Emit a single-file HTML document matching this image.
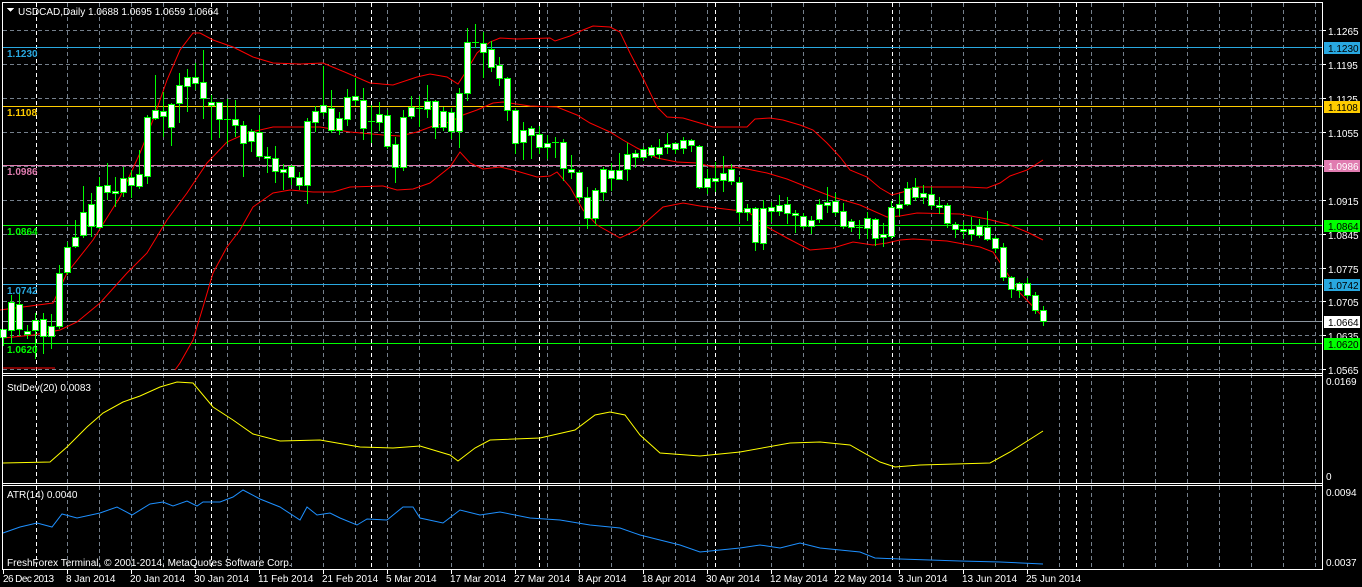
<!DOCTYPE html>
<html><head><meta charset="utf-8"><style>
html,body{margin:0;padding:0;background:#000;width:1362px;height:587px;overflow:hidden}
svg{display:block}
text{font-family:"Liberation Sans",sans-serif;font-size:10px}
</style></head><body>
<svg id="s" width="1362" height="587" xmlns="http://www.w3.org/2000/svg" shape-rendering="crispEdges">
<rect width="1362" height="587" fill="#000"/>
<g id="grid"></g>
<g id="lines"></g>
<g id="bands" fill="none" stroke="#ff0000" stroke-width="1" shape-rendering="auto"></g>
<g id="candles"></g>
<g id="ind" fill="none" shape-rendering="auto"></g>
<g id="frame" stroke="#fff" fill="none">
<path d="M2.5 2.5H1322.5V569.5H2.5Z"/>
<path d="M2 373.5H1322M2 375.5H1322M2 483.5H1322M2 485.5H1322"/>
</g>
<g id="txt" fill="#fff"></g>
</svg>
<script>
const NS="http://www.w3.org/2000/svg";
function el(p,t,a,txt){const e=document.createElementNS(NS,t);for(const k in a)e.setAttribute(k,a[k]);if(txt!==undefined)e.textContent=txt;document.getElementById(p).appendChild(e);return e;}
for(let x=67;x<1322;x+=32){el('grid','line',{x1:x+.5,y1:3,x2:x+.5,y2:569,stroke:'#75808c','stroke-dasharray':'4 3'});}
[36,211,371,539,715,892,1076].forEach(x=>el('grid','line',{x1:x+.5,y1:3,x2:x+.5,y2:569,stroke:'#fff','stroke-dasharray':'4 3'}));
[30,64,98,132,166,200,234,268,301,335,369].forEach(y=>el('grid','line',{x1:3,y1:y+.5,x2:1322,y2:y+.5,stroke:'#75808c','stroke-dasharray':'4 3'}));
const lv=[[47,'#29a8e0','1.1230','#000'],[106,'#ffcc00','1.1108','#000'],[165,'#e07cb0','1.0986','#fff'],[225,'#00ff00','1.0864','#000'],[284,'#29a8e0','1.0742','#000'],[343,'#00ff00','1.0620','#000']];
el('lines','line',{x1:3,y1:321.5,x2:1322,y2:321.5,stroke:'#8c96a0'});
lv.forEach(l=>el('lines','line',{x1:3,y1:l[0]+.5,x2:1322,y2:l[0]+.5,stroke:l[1]}));
const up=[[0,310],[53,303],[67,273],[93,240],[120,197],[140,153],[153,120],[167,80],[180,50],[193,33],[200,33],[213,40],[233,47],[253,57],[273,63],[300,64],[323,63],[347,73],[370,83],[393,85],[417,77],[430,74],[447,77],[458,84],[467,70],[477,53],[490,42],[500,38],[517,39],[550,38],[555,41],[570,36],[583,30],[593,26],[610,27],[620,32],[630,53],[643,78],[657,107],[667,117],[683,118],[700,123],[713,127],[747,127],[755,119],[770,118],[783,120],[800,125],[813,130],[827,143],[840,157],[850,170],[867,177],[880,188],[892,195],[903,192],[917,187],[967,187],[987,188],[1000,183],[1010,176],[1027,170],[1043,160]];
const md=[[3,338],[33,335],[60,330],[77,322],[100,303],[127,273],[147,253],[167,220],[187,193],[207,163],[227,142],[247,133],[273,127],[320,127],[350,132],[383,135],[400,136],[417,132],[433,126],[450,122],[463,115],[477,110],[493,103],[503,102],[530,106],[557,107],[577,115],[590,123],[610,132],[623,140],[637,148],[657,158],[677,162],[697,163],[713,167],[733,167],[747,169],[767,173],[787,179],[807,187],[833,197],[860,205],[887,217],[900,216],[917,213],[960,214],[987,219],[1007,224],[1027,232],[1043,240]];
const lo=[[175,370],[180,363],[193,340],[203,307],[213,273],[227,247],[240,230],[253,207],[273,193],[290,190],[313,192],[333,192],[350,187],[383,186],[397,190],[413,189],[430,183],[450,167],[460,152],[470,163],[483,169],[500,167],[513,170],[537,177],[550,176],[557,172],[570,187],[583,210],[597,225],[620,238],[637,230],[663,207],[683,203],[700,206],[733,210],[747,211],[767,227],[787,238],[810,250],[833,248],[853,242],[873,245],[887,243],[900,240],[913,239],[947,241],[980,247],[993,252],[1007,273],[1020,293],[1043,317]];
el('bands','path',{d:'M3 368H55'});
[up,md,lo].forEach(p=>el('bands','polyline',{points:p.map(a=>a.join(',')).join(' ')}));
const C=[[329,337,329,345],[302,330,295,343],[304,329,293,335],[331,334,325,338],[320,330,313,358],[319,336,313,353],[326,336,314,348],[273,326,265,328],[247,272,242,274],[237,246,220,247],[212,235,186,237],[204,226,193,236],[186,227,177,228],[185,192,163,199],[191,193,177,206],[178,192,167,196],[177,185,170,197],[174,186,150,188],[117,176,115,183],[110,118,75,119],[111,116,92,136],[104,127,103,145],[85,103,73,122],[77,86,69,111],[77,83,63,89],[82,98,50,118],[102,105,95,139],[102,119,102,137],[119,120,99,143],[119,125,100,136],[125,143,121,176],[131,141,129,151],[132,156,115,157],[156,158,147,172],[158,171,146,182],[169,172,164,189],[166,177,165,184],[177,185,172,189],[121,185,118,203],[111,122,106,131],[105,112,66,115],[108,130,90,132],[118,130,112,134],[97,119,89,125],[96,100,78,105],
[100,128,88,139],[121,122,105,142],[114,122,102,130],[115,146,110,148],[144,167,137,182],[117,167,110,170],[107,116,96,118],[108,109,96,126],[101,109,85,117],[101,127,100,138],[111,127,107,130],[112,131,108,138],[93,131,88,147],[42,93,28,100],[42,43,24,47],[43,52,32,77],[49,67,41,71],[65,78,57,85],[78,110,77,120],[110,143,108,153],[130,142,122,159],[128,135,126,158],[134,147,126,153],[143,147,135,158],[142,143,137,157],[142,168,139,180],[169,172,155,178],[172,197,170,202],[197,218,187,228],[190,218,188,223],[169,192,167,200],[170,178,163,190],[170,179,153,179],[154,169,143,180],[153,157,150,167],[149,157,147,160],[147,155,145,157],[147,154,139,158],[144,147,133,153],[143,149,142,153],[140,148,137,153],[140,145,139,151],[146,187,145,188],[178,187,169,193],
[178,181,162,191],[173,180,156,191],[169,181,164,184],[182,212,177,221],[208,212,204,220],[208,242,207,250],[208,243,200,249],[207,211,202,221],[205,211,195,215],[204,213,197,223],[213,215,210,232],[216,226,213,228],[220,226,216,233],[204,219,199,222],[202,205,187,212],[201,212,193,215],[211,226,203,228],[221,227,219,231],[227,228,220,238],[218,228,212,238],[219,238,218,245],[234,237,223,246],[207,236,201,238],[204,208,195,215],[188,204,182,205],[187,197,178,200],[193,197,185,203],[194,205,187,208],[205,207,197,213],[205,223,203,227],[224,229,222,237],[229,231,222,238],[229,234,217,240],[226,235,219,237],[227,239,211,240],[238,248,236,252],[247,277,243,280],[277,289,276,297],[283,290,282,297],[283,295,278,297],[295,310,292,313],[310,321,306,325]];
C.forEach((c,k)=>{const x=3+8*k;
 if(c[0]>c[2])el('candles','line',{x1:x+.5,y1:c[2],x2:x+.5,y2:c[0],stroke:'#00ff00'});
 if(c[3]>c[1])el('candles','line',{x1:x+.5,y1:c[1],x2:x+.5,y2:c[3]+1,stroke:'#00ff00'});
 if(c[1]-c[0]<=1){el('candles','line',{x1:x-3,y1:c[0]+.5,x2:x+4,y2:c[0]+.5,stroke:'#00ff00'});}
 else el('candles','rect',{x:x-2.5,y:c[0]+.5,width:6,height:c[1]-c[0],fill:'#fff',stroke:'#00ff00'});
});
const sd=[[3,463],[50,462],[67,447],[87,427],[103,413],[123,402],[140,396],[160,387],[177,382],[193,383],[213,407],[233,420],[253,434],[280,441],[320,440],[360,447],[393,448],[420,446],[450,455],[458,461],[475,448],[490,440],[540,438],[575,430],[595,415],[610,412],[625,415],[640,435],[660,453],[700,456],[740,452],[790,443],[820,442],[850,445],[880,462],[895,467],[920,465],[990,463],[1010,452],[1043,431]];
const at=[[3,533],[20,527],[37,523],[52,527],[62,514],[77,518],[100,513],[117,507],[132,515],[150,504],[163,502],[173,506],[187,501],[197,506],[203,502],[220,502],[233,497],[243,490],[260,499],[280,507],[300,520],[307,507],[317,515],[330,513],[340,518],[357,525],[367,519],[387,520],[403,507],[413,507],[420,518],[443,523],[460,510],[480,515],[500,512],[530,518],[560,520],[590,525],[620,528],[640,535],[660,540],[680,545],[700,552],[720,550],[740,548],[760,545],[780,548],[800,543],[820,548],[840,550],[860,552],[875,558],[900,559],[930,560],[960,561],[1000,562],[1043,564]];
el('ind','polyline',{points:sd.map(a=>a.join(',')).join(' '),stroke:'#ffff00'});
el('ind','polyline',{points:at.map(a=>a.join(',')).join(' '),stroke:'#1e90ff'});
el('txt','path',{d:'M7 8H14L10.5 12Z',fill:'#fff'});
el('txt','text',{x:18,y:15},'USDCAD,Daily  1.0688 1.0695 1.0659 1.0664');
el('txt','text',{x:7,y:391},'StdDev(20) 0.0083');
el('txt','text',{x:7,y:498},'ATR(14) 0.0040');
el('txt','text',{x:7,y:566},'FreshForex Terminal, © 2001-2014, MetaQuotes Software Corp.');
lv.forEach(l=>el('txt','text',{x:7,y:l[0]+10,fill:l[1],'font-weight':'bold','font-size':'10','font-family':'Liberation Mono, monospace'},l[2]));
[['1.1265',30],['1.1195',64],['1.1125',98],['1.1055',132],['1.0985',166],['1.0915',200],['1.0845',234],['1.0775',268],['1.0705',301],['1.0635',335],['1.0565',369]].forEach(p=>{
 el('txt','line',{x1:1322,y1:p[1]+.5,x2:1326,y2:p[1]+.5,stroke:'#fff'});
 el('txt','text',{x:1328,y:p[1]+5},p[0]);});
lv.concat([[321,'#ffffff','1.0664','#000']]).forEach(l=>{
 el('txt','rect',{x:1324,y:l[0]-5,width:36,height:12,fill:l[1]});
 el('txt','text',{x:1328,y:l[0]+5,fill:l[3]},l[2]);});
[['0.0169',381],['0',476],['0.0094',492],['0.0037',562]].forEach(p=>el('txt','text',{x:1326,y:p[1]+4},p[0]));
const d=['26 Dec 2013','8 Jan 2014','20 Jan 2014','30 Jan 2014','11 Feb 2014','21 Feb 2014','5 Mar 2014','17 Mar 2014','27 Mar 2014','8 Apr 2014','18 Apr 2014','30 Apr 2014','12 May 2014','22 May 2014','3 Jun 2014','13 Jun 2014','25 Jun 2014'];
d.forEach((t,i)=>{const x=i==0?3:67+64*(i-1);el('txt','line',{x1:x+.5,y1:569,x2:x+.5,y2:574,stroke:'#fff'});el('txt','text',{x:i==0?3:x-1,y:582,textLength:i==0?51:undefined},t);});
</script>
</body></html>
